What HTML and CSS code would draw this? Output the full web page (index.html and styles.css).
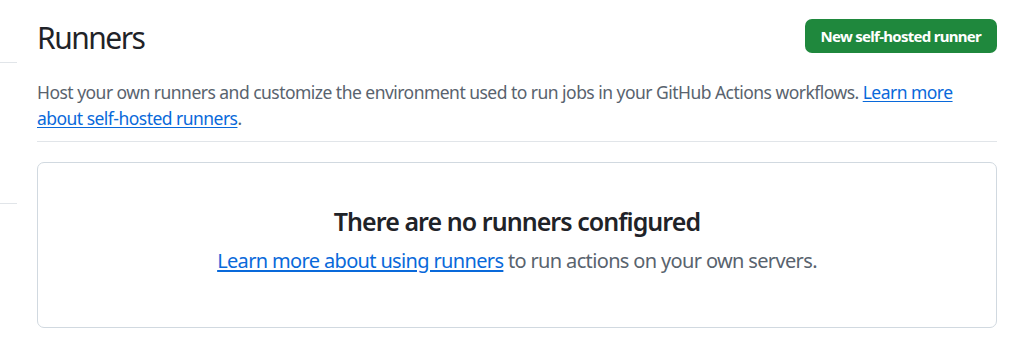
FILE: index.html
```html
<html>
  <head>
    <title>Runners</title>
    <link rel="stylesheet" href="styles.css">
  </head>
  <body>
    <div class="layout">
      <div class="sidebar">
        <div class="side-rule first"></div>
        <div class="side-rule second"></div>
      </div>

      <div class="main">
        <div class="subhead">
          <div class="subhead-row">
            <h2 class="subhead-title">Runners</h2>
            <a href="#" class="btn-primary">New self-hosted runner</a>
          </div>
          <p class="subhead-desc">
            Host your own runners and customize the environment used to run jobs in your GitHub Actions workflows.
            <a href="#" class="link">Learn more about self-hosted runners</a>.
          </p>
        </div>

        <div class="blankslate">
          <h3 class="blankslate-heading">There are no runners configured</h3>
          <p class="blankslate-text"><a href="#" class="link">Learn more about using runners</a> to run actions on your own servers.</p>
        </div>
      </div>
    </div>
  </body>
</html>
```

FILE: styles.css
```css
body {
  margin: 0px;
  padding: 0px;
  background: #ffffff;
  font-family: "Noto Sans", sans-serif;
  color: #1f2328;
}

.layout {
  display: flex;
}

/* left nav, mostly cut off */
.sidebar {
  width: 17px;
  flex-shrink: 0;
}
.side-rule { height: 1px; background: #e1e5e9; }
.side-rule.first { margin-top: 62px; }
.side-rule.second { margin-top: 140px; }

.main {
  width: 960px;
  margin-left: 20px;
  padding-top: 19px;
}

.subhead {
  border-bottom: 1px solid #e1e5e9;
  padding-bottom: 10px;
}

.subhead-row {
  display: flex;
  justify-content: space-between;
  align-items: flex-start;
}

.subhead-title {
  margin: 0px;
  font-size: 30px;
  font-weight: 400;
  line-height: 37.5px;
  letter-spacing: -1.5px;
}

.btn-primary {
  display: inline-block;
  height: 34px;
  line-height: 34px;
  padding: 0px 16px;
  box-sizing: border-box;
  background: #1f883d;
  border-radius: 7px;
  color: #ffffff;
  font-size: 15px;
  font-weight: 700;
  letter-spacing: -0.72px;
  text-decoration: none;
}

.subhead-desc {
  margin: 22px 0px 0px 0px;
  font-size: 17.5px;
  line-height: 26.25px;
  letter-spacing: -0.53px;
  color: #59636e;
}

a.link { color: #0969da; text-decoration: underline; text-underline-offset: 2px; }

.blankslate {
  margin-top: 20px;
  border: 1px solid #d1d9e0;
  border-radius: 7px;
  padding: 40px 20px 51px 20px;
  text-align: center;
}

.blankslate-heading {
  margin: 0px;
  font-size: 25px;
  font-weight: 600;
  line-height: 37.5px;
  letter-spacing: -0.95px;
}

.blankslate-text {
  margin: 5px 0px 0px 0px;
  font-size: 20px;
  line-height: 30px;
  letter-spacing: -0.65px;
  color: #59636e;
}
```
